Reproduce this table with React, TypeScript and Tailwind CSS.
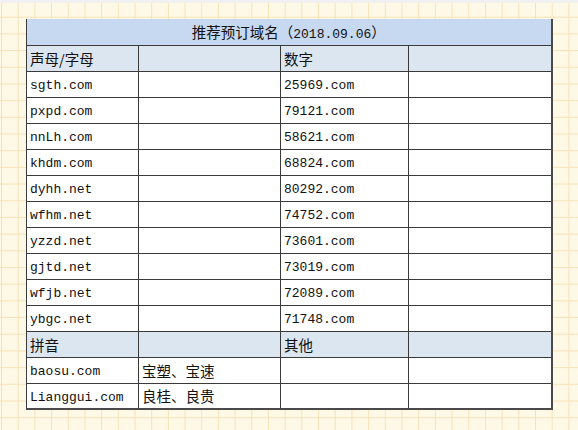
import React from 'react';

const rows: [string, string][] = [
  ['sgth.com', '25969.com'],
  ['pxpd.com', '79121.com'],
  ['nnLh.com', '58621.com'],
  ['khdm.com', '68824.com'],
  ['dyhh.net', '80292.com'],
  ['wfhm.net', '74752.com'],
  ['yzzd.net', '73601.com'],
  ['gjtd.net', '73019.com'],
  ['wfjb.net', '72089.com'],
  ['ybgc.net', '71748.com'],
];

const mono = 'font-["Liberation_Mono","Noto_Sans_CJK_SC",monospace] text-[13px]';
const cjk = 'font-["Noto_Sans_CJK_SC",sans-serif] text-[14.5px]';

function Cell({ children, className = '' }: { children?: React.ReactNode; className?: string }) {
  return (
    <td className={`h-[26px] border border-[#3a3a3a] px-[3px] pt-[3px] pb-0 leading-none text-[#111] whitespace-nowrap ${className}`}>
      {children}
    </td>
  );
}

function HeadRow({ a, c }: { a: string; c: string }) {
  return (
    <tr className="bg-[#dce6f1]">
      <Cell><span className={cjk}>{a}</span></Cell>
      <Cell />
      <Cell><span className={cjk}>{c}</span></Cell>
      <Cell className="border-r-2 border-r-[#4a4a4a]" />
    </tr>
  );
}

export default function App() {
  return (
    <div className="w-[578px] h-[430px] overflow-hidden bg-[#fef9e6] bg-[linear-gradient(to_right,#f6e2b8_1px,transparent_1px),linear-gradient(to_bottom,#f6e2b8_1px,transparent_1px)] bg-size-[16.7px_16.7px] bg-position-[1px_0px]">
      <div className="h-[3px] bg-[#f1f1f1]" />
      <div className="pt-[16px] pl-[26px]">
        <table className={`table-fixed border-collapse w-[525px] ${mono}`}>
          <colgroup>
            <col className="w-[112px]" />
            <col className="w-[142px]" />
            <col className="w-[128px]" />
            <col className="w-[143px]" />
          </colgroup>
          <tbody>
            <tr className="bg-[#c6d9f0]">
              <td colSpan={4} className="h-[26px] border-l border-l-[#3a3a3a] border-r-2 border-r-[#4a4a4a] border-b border-b-[#3a3a3a] text-center px-0 pt-[2px] pb-0 leading-none text-[#111]">
                <span className={cjk}>推荐预订域名（</span>
                <span>2018.09.06</span>
                <span className={cjk}>）</span>
              </td>
            </tr>
            <HeadRow a="声母/字母" c="数字" />
            {rows.map(([a, b]) => (
              <tr key={a} className="bg-white">
                <Cell>{a}</Cell>
                <Cell />
                <Cell>{b}</Cell>
                <Cell className="border-r-2 border-r-[#4a4a4a]" />
              </tr>
            ))}
            <HeadRow a="拼音" c="其他" />
            <tr className="bg-white">
              <Cell>baosu.com</Cell>
              <Cell><span className={cjk}>宝塑、宝速</span></Cell>
              <Cell />
              <Cell className="border-r-2 border-r-[#4a4a4a]" />
            </tr>
            <tr className="bg-white">
              <Cell className="border-b-2 border-b-[#4a4a4a]">Lianggui.com</Cell>
              <Cell className="border-b-2 border-b-[#4a4a4a]"><span className={cjk}>良桂、良贵</span></Cell>
              <Cell className="border-b-2 border-b-[#4a4a4a]" />
              <Cell className="border-r-2 border-r-[#4a4a4a] border-b-2 border-b-[#4a4a4a]" />
            </tr>
          </tbody>
        </table>
      </div>
    </div>
  );
}
